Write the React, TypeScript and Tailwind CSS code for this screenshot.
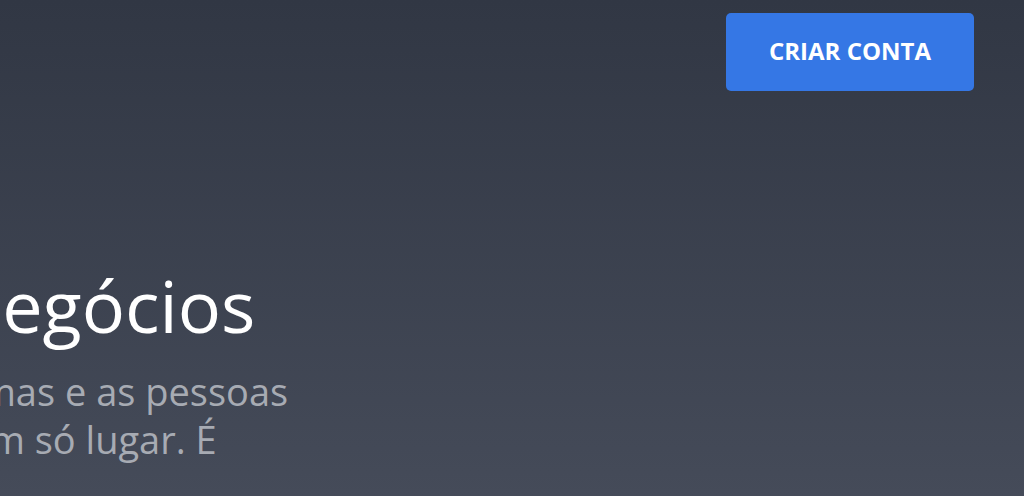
export default function App() {
  return (
    <div
      className="relative h-[496px] w-[1024px] overflow-hidden bg-gradient-to-b from-[#313744] to-[#454b59]"
      style={{ fontFamily: '"Open Sans", "Noto Sans", sans-serif' }}
    >
      {/* Header */}
      <header className="flex justify-end pt-[13px] pr-[50px]">
        <button className="flex h-[78px] w-[248px] items-center justify-center rounded-[5px] bg-[#3577e5] pb-[3px] text-[24px] font-bold text-white">
          CRIAR CONTA
        </button>
      </header>

      {/* Hero */}
      <section className="mt-[174px] whitespace-nowrap">
        <h1 className="-ml-[42px] text-[72px] leading-[80px] font-normal text-white">
          negócios
        </h1>
        <p className="-ml-[100px] mt-[22px] text-[38px] leading-[48px] text-[#a7abb3]">
          sistemas e as pessoas
          <br />
          em um só lugar. É
        </p>
      </section>
    </div>
  );
}
